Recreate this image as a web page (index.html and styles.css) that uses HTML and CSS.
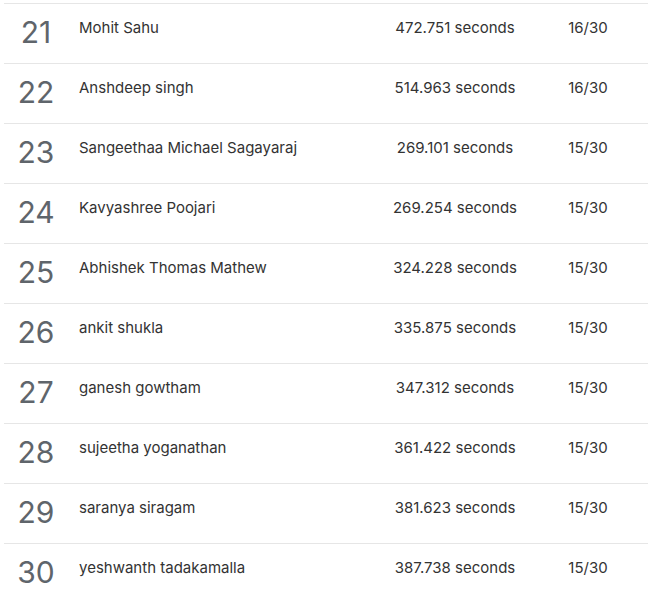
FILE: index.html
```html
<!DOCTYPE html>
<html>
<head>
<meta charset="utf-8">
<link rel="stylesheet" href="styles.css">
</head>
<body>
<div class="board">
  <div class="row"><div class="rank">21</div><div class="name">Mohit Sahu</div><div class="time">472.751 seconds</div><div class="score">16/30</div></div>
  <div class="row"><div class="rank">22</div><div class="name">Anshdeep singh</div><div class="time">514.963 seconds</div><div class="score">16/30</div></div>
  <div class="row"><div class="rank">23</div><div class="name">Sangeethaa Michael Sagayaraj</div><div class="time">269.101 seconds</div><div class="score">15/30</div></div>
  <div class="row"><div class="rank">24</div><div class="name">Kavyashree Poojari</div><div class="time">269.254 seconds</div><div class="score">15/30</div></div>
  <div class="row"><div class="rank">25</div><div class="name">Abhishek Thomas Mathew</div><div class="time">324.228 seconds</div><div class="score">15/30</div></div>
  <div class="row"><div class="rank">26</div><div class="name">ankit shukla</div><div class="time">335.875 seconds</div><div class="score">15/30</div></div>
  <div class="row"><div class="rank">27</div><div class="name">ganesh gowtham</div><div class="time">347.312 seconds</div><div class="score">15/30</div></div>
  <div class="row"><div class="rank">28</div><div class="name">sujeetha yoganathan</div><div class="time">361.422 seconds</div><div class="score">15/30</div></div>
  <div class="row"><div class="rank">29</div><div class="name">saranya siragam</div><div class="time">381.623 seconds</div><div class="score">15/30</div></div>
  <div class="row"><div class="rank">30</div><div class="name">yeshwanth tadakamalla</div><div class="time">387.738 seconds</div><div class="score">15/30</div></div>
</div>
</body>
</html>
```

FILE: styles.css
```css
html, body {
  margin: 0;
  padding: 0;
  background: #ffffff;
}
body {
  font-family: Inter, Lato, Arial, sans-serif;
  color: #333333;
  overflow: hidden;
}
.board {
  padding: 3px 0 0 4px;
}
.row {
  display: grid;
  grid-template-columns: 64px 307px 160px 106px 1fr;
  height: 60px;
  box-sizing: border-box;
  border-top: 1px solid #e6e6e6;
}
.rank {
  text-align: center;
  font-size: 30px;
  font-weight: 400;
  line-height: 40px;
  padding-top: 8px;
  color: #5f656b;
}
.name, .time, .score {
  font-size: 15px;
  line-height: 20px;
  padding-top: 14px;
  color: #333333;
}
.name {
  padding-left: 11px;
}
.time, .score {
  text-align: center;
}
```
